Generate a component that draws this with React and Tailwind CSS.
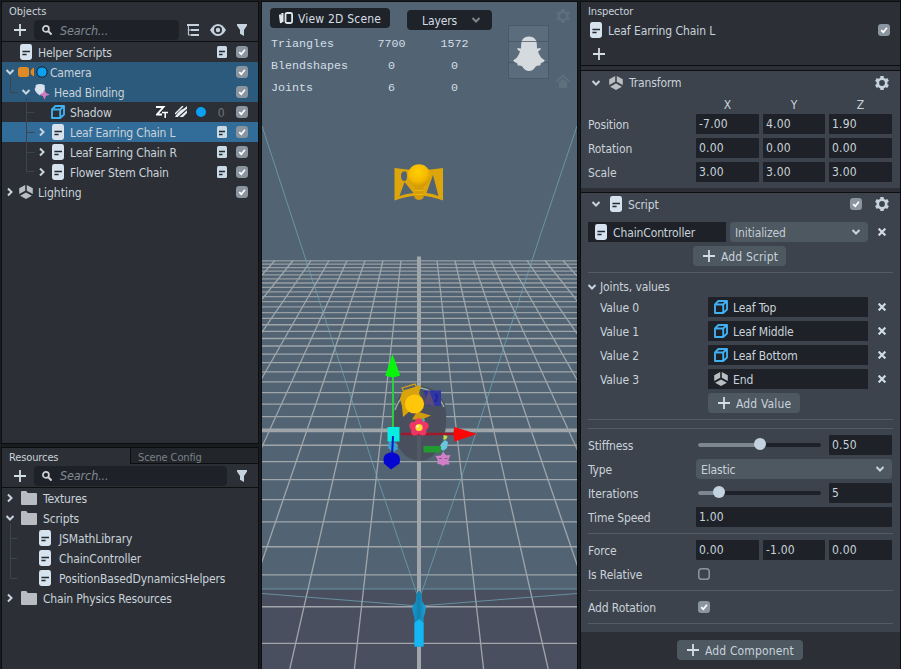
import React from 'react';

const PlusIcon = () => (
  <svg className="block h-3 w-3 shrink-0" viewBox="0 0 12 12" fill="none" stroke="#d3dde6" strokeWidth="1.8">
    <path d="M6 0v12M0 6h12" />
  </svg>
);

const ScriptIcon = ({ small }) =>
  small ? (
    <svg className="block h-3 w-2.5 shrink-0" viewBox="0 0 10 12">
      <rect width="10" height="12" rx="1.6" fill="#c9d9e6" />
      <path d="M2 5.500h6M2 8.500h3.500" stroke="#252a31" strokeWidth="1.500" />
    </svg>
  ) : (
    <svg className="block h-4 w-3 shrink-0" viewBox="0 0 12 16">
      <rect width="12" height="16" rx="2.4" fill="#d6e2ee" />
      <path d="M2.4 7.500h7.600M2.400 10.500h4.200" stroke="#252a31" strokeWidth="1.700" />
    </svg>
  );

const Check = ({ on = true }) => (
  <svg className="block h-3 w-3 shrink-0" viewBox="0 0 12 12" fill="none">
    {on ? (
      <>
        <rect width="12" height="12" rx="3.2" fill="#8b95a0" />
        <path d="M3.2 6.1l2.1 2.1L8.9 3.7" stroke="#fff" strokeWidth="1.7" />
      </>
    ) : (
      <rect x=".8" y=".8" width="10.4" height="10.4" rx="2.8" stroke="#8b95a0" strokeWidth="1.5" />
    )}
  </svg>
);

const Chevron = ({ right, dim }) => (
  <svg
    className={right ? 'block h-2.5 w-2 shrink-0 -rotate-90' : 'block h-2.5 w-2 shrink-0'}
    viewBox="0 0 8 10"
    fill="none"
    stroke={dim ? '#7b858e' : '#c7d3dd'}
    strokeWidth="2"
    overflow="visible"
  >
    <path d="M0.5 3l3.5 3.500l3.500-3.500" />
  </svg>
);

const CubeIcon = () => (
  <svg className="block h-3.5 w-3.5 shrink-0" viewBox="0 0 14 14" fill="none" stroke="#3fb0f0" strokeWidth="1.900" strokeLinejoin="round">
    <path d="M1 4.500h8.200v8.500H1zM1 4.500L4.400 1H13L9.200 4.500M13 1v8.500L9.200 13" />
  </svg>
);

const ObjectIcon = () => (
  <svg className="block h-3.5 w-3.5 shrink-0" viewBox="0 0 14 14" fill="#b9bec4">
    <path d="M6.2 0v5.7L0.2 9V3.2zM7.8 0v5.7l6 3.3V3.2zM7 7.6l5.900 3.200L7 14l-5.900-3.200z" />
  </svg>
);

const Folder = () => (
  <svg className="block h-3.5 w-4 shrink-0" viewBox="0 0 16 14" fill="#b9bdc2">
    <path d="M0 1q0-1 1-1h4.2l1.6 2H15q1 0 1 1v10q0 1-1 1H1q-1 0-1-1z" />
  </svg>
);

const Cross = () => (
  <svg className="block h-2 w-2 shrink-0" viewBox="0 0 8 8" fill="none" stroke="#d0dbe4" strokeWidth="2.200">
    <path d="M.6.6l6.8 6.8M7.4.6L.6 7.4" />
  </svg>
);

const Gear = () => (
  <svg className="block h-3.5 w-3.5 shrink-0" viewBox="0 0 14 14" fill="none">
    <circle cx="7" cy="7" r="4.200" stroke="#c6d3df" strokeWidth="2.600" />
    <path
      d="M7 0v2.6M7 11.4V14M.9 3.5l2.3 1.3M10.8 9.2l2.3 1.3M.9 10.5l2.3-1.3M10.8 4.8l2.3-1.3"
      stroke="#c6d3df"
      strokeWidth="3.400"
    />
  </svg>
);

const Magnifier = () => (
  <svg className="block h-2.5 w-2.5 shrink-0" viewBox="0 0 10 10" fill="none" stroke="#cdd3d9" strokeWidth="1.7">
    <circle cx="3.9" cy="3.9" r="3" />
    <path d="M6 6l3.6 3.6" strokeWidth="2" />
  </svg>
);

const Funnel = () => (
  <svg className="block h-3 w-2.5 shrink-0" viewBox="0 0 10 12" fill="#c6d3df">
    <path d="M0 0h10v1.5L7 6v6L3 9.8V6L0 1.5z" />
  </svg>
);

const Search = ({ grow }) => (
  <div className={`flex h-5 items-center rounded-sm bg-[#1e2228] pl-2 ${grow ? 'w-[193px]' : 'w-[145px]'}`}>
    <Magnifier />
    <span className="ml-2 pt-0.5 text-[12.5px] italic text-[#818991]">Search...</span>
  </div>
);

const TreeLine = ({ d, h, className }) => (
  <svg className={`pointer-events-none absolute w-4 ${className}`} height={h} fill="none" stroke="#3d444c" strokeWidth="1">
    <path d={d} />
  </svg>
);

const Row = ({ indent, bg = '', children, end }) => (
  <div className={`flex h-5 shrink-0 items-center pr-2.5 [&>span]:pt-0.5 ${indent} ${bg}`}>
    {children}
    <div className="ml-auto flex items-center gap-[9px]">{end}</div>
  </div>
);

const ScriptEnd = () => (
  <>
    <ScriptIcon small />
    <Check />
  </>
);

function ObjectsPanel() {
  return (
    <div className="relative flex h-[443px] flex-col border border-[#0c0e10] bg-[#2c3036] tracking-[-.17px]">
      <div className="flex h-[18px] shrink-0 items-center pl-[7px] pt-px text-[11px] tracking-normal">Objects</div>
      <div className="flex h-[22px] shrink-0 items-center border-b border-[#0c0e10] pb-px pl-3 pr-[11px]">
        <PlusIcon />
        <div className="ml-2">
          <Search />
        </div>
        <svg className="ml-2 block h-3 w-3" viewBox="0 0 12 12" fill="none" stroke="#c6d3df" strokeWidth="1.8">
          <path d="M0 1h12M4 6h8M4 11h8" />
          <path d="M1.4 1v5h2.6M1.4 5v6h2.6" strokeWidth="1" />
        </svg>
        <svg className="ml-[11px] block h-3 w-4" viewBox="0 0 16 12">
          <path d="M0 6Q3.500 0 8 0T16 6Q12.500 12 8 12T0 6z" fill="#c6d3df" />
          <circle cx="8" cy="6" r="4" fill="#2c3036" />
          <circle cx="8" cy="6" r="2.200" fill="#c6d3df" />
        </svg>
        <div className="ml-auto">
          <Funnel />
        </div>
      </div>
      <Row indent="pl-[18px]" end={<ScriptEnd />}>
        <ScriptIcon />
        <span className="ml-1.5">Helper Scripts</span>
      </Row>
      <Row indent="pl-1" bg="bg-[#2b5a7d]" end={<Check />}>
        <Chevron />
        <svg className="ml-1 block h-3 w-[30px]" viewBox="0 0 30 12">
          <rect y="1" width="11" height="10" rx="2.500" fill="#e08a26" />
          <path d="M16 1.500v9q-3.500-2-3.500-4.500t3.500-4.500z" fill="#e08a26" />
          <circle cx="24" cy="6" r="5.200" fill="#0c9ff2" stroke="#15222e" strokeWidth="1" />
        </svg>
        <span className="ml-0.5">Camera</span>
      </Row>
      <Row indent="pl-5" bg="bg-[#2b5a7d]" end={<Check />}>
        <Chevron />
        <svg className="ml-1 block h-4 w-4" viewBox="0 0 16 16">
          <path d="M1.800 1Q6-1 10.500 1l.400 4Q10.500 9 6 11.500 1.600 9 1.200 5z" fill="#d6e2ee" />
          <path d="M0.500 4.500h2v3H1.500z" fill="#d6e2ee" />
          <path d="M10.500 5.500l1.500 3.600L15.800 10.600l-3.800 1.500L10.500 15.800l-1.500-3.700-3.800-1.500 3.800-1.500z" fill="#d27bbd" />
        </svg>
        <span className="ml-1">Head Binding</span>
      </Row>
      <Row
        indent="pl-[49px]"
        end={
          <>
            <svg className="block h-3 w-3" viewBox="0 0 12 12" fill="none" stroke="#fff" strokeWidth="1.900">
              <path d="M0 1h7.500L1 8.500h5" />
              <path d="M6 6.500h6M9.200 6.500V12" strokeWidth="1.500" />
            </svg>
            <svg className="-ml-0.5 block h-3 w-3" viewBox="0 0 12 12" fill="#e9eef2">
              <path d="M4 4Q8 4 12 0v7l-4 4H0z" />
              <path d="M0 9L9 0M2.500 12L12 3.500M0 5l5-5" stroke="#2c3036" strokeWidth="1.100" />
              <path d="M0 8L8 0" stroke="#e9eef2" strokeWidth="1.500" />
            </svg>
            <div className="h-2.5 w-2.5 rounded-full bg-[#0c9ff2]" />
            <span className="w-3 pt-0.5 text-center text-[#6d757e]">0</span>
            <Check />
          </>
        }
      >
        <CubeIcon />
        <span className="ml-[5px]">Shadow</span>
      </Row>
      <Row indent="pl-9" bg="bg-[#326d99]" end={<ScriptEnd />}>
        <Chevron right />
        <div className="ml-1.5 mr-1.5">
          <ScriptIcon />
        </div>
        <span>Leaf Earring Chain L</span>
      </Row>
      <Row indent="pl-9" end={<ScriptEnd />}>
        <Chevron right />
        <div className="ml-1.5 mr-1.5">
          <ScriptIcon />
        </div>
        <span>Leaf Earring Chain R</span>
      </Row>
      <Row indent="pl-9" end={<ScriptEnd />}>
        <Chevron right />
        <div className="ml-1.5 mr-1.5">
          <ScriptIcon />
        </div>
        <span>Flower Stem Chain</span>
      </Row>
      <Row indent="pl-1" end={<Check />}>
        <Chevron right />
        <div className="ml-[5px] mr-[5px]">
          <ObjectIcon />
        </div>
        <span className="tracking-normal">Lighting</span>
      </Row>
      <TreeLine className="left-2 top-[75px]" h="20" d="M.5 0v15.500h7" />
      <TreeLine className="left-6 top-[96px]" h="80" d="M.5 0v73.500h8M.500 14.500h8M.500 34.500h8M.500 54.500h8" />
    </div>
  );
}

function ResourcesPanel() {
  return (
    <div className="relative mt-[3px] flex flex-1 flex-col border border-b-0 border-[#0c0e10] bg-[#2c3036]">
      <div className="flex h-4 shrink-0">
        <div className="flex w-32 items-center pl-[7px] pt-0.5 text-[11px]">Resources</div>
        <div className="flex flex-1 items-center border-b border-l border-[#0c0e10] bg-[#22262b] pl-[7px] pt-1 text-[11px] text-[#7a8087]">
          Scene Config
        </div>
      </div>
      <div className="flex h-6 shrink-0 items-center border-b border-[#0c0e10] pl-3 pr-[11px]">
        <PlusIcon />
        <div className="ml-2">
          <Search grow />
        </div>
        <div className="ml-auto">
          <Funnel />
        </div>
      </div>
      <Row indent="pl-1">
        <Chevron right />
        <div className="ml-[7px] mr-1.5">
          <Folder />
        </div>
        <span>Textures</span>
      </Row>
      <Row indent="pl-1">
        <Chevron />
        <div className="ml-[7px] mr-1.5">
          <Folder />
        </div>
        <span>Scripts</span>
      </Row>
      {['JSMathLibrary', 'ChainController', 'PositionBasedDynamicsHelpers'].map((name) => (
        <Row indent="pl-[37px]" key={name}>
          <ScriptIcon />
          <span className="ml-2">{name}</span>
        </Row>
      ))}
      <Row indent="pl-1">
        <Chevron right />
        <div className="ml-[7px] mr-1.5">
          <Folder />
        </div>
        <span className="tracking-[-.17px]">Chain Physics Resources</span>
      </Row>
      <TreeLine className="left-2 top-[76px]" h="60" d="M.5 0v54.500h7M.500 14.500h7M.500 34.500h7" />
    </div>
  );
}

const rows = Array.from({ length: 37 }, (_, i) => {
  const n = i - 25;
  return { n, y: 107.33 + 1 / 3 / (0.00103199 - n * 0.000045567) };
});
const cols = Array.from({ length: 17 }, (_, i) => i - 8);

function Scene() {
  return (
    <svg className="absolute inset-0 block h-full w-full" viewBox="262 2 315 667">
      <defs>
        <radialGradient id="bulb" cx=".45" cy=".35" r=".7">
          <stop offset="0" stopColor="#ffd000" />
          <stop offset=".6" stopColor="#f5b800" />
          <stop offset="1" stopColor="#c89000" />
        </radialGradient>
        <linearGradient id="cam" x1="0" x2="1">
          <stop offset="0" stopColor="#149bd2" />
          <stop offset=".5" stopColor="#1480ae" />
          <stop offset="1" stopColor="#18a6de" />
        </linearGradient>
      </defs>
      <rect x="262" y="2" width="315" height="667" fill="#526473" />
      <rect x="262" y="589" width="315" height="80" fill="#4a4f5f" />
      <g stroke="#a0a5aa">
        {rows.map(({ n, y }) => (
          <path key={n} d={`M262 ${y}H577`} strokeWidth={n === 0 ? 3.6 : 1.3} opacity={n < -12 ? 0.9 : 1} />
        ))}
        {cols.map((k) => (
          <path key={k} d={`M${419 + k * 18} 260.5L${419 + k * 64.6} 669`} strokeWidth={k === 0 ? 0 : 1.3} />
        ))}
        <path d="M419 256.500V669" strokeWidth="4" />
      </g>
      <g fill="none" stroke="#6fa5b5" strokeWidth="1" opacity=".75">
        <path d="M262 126L299.300 240L377 476.700L419 600L461.700 476.700L538.700 240L577 126" />
        <path d="M262 589H577M262 593.500L419 606L577 593.500" />
      </g>

      <g>
        <path
          fillRule="evenodd"
          fill="#dca50b"
          d="M394.500 168Q419 172 443 168V200.500Q419 191 394.500 200.500zM404 171.500q-3 0-3 4.500t3 5 3-5-3-4.500zM404.500 182l-5 14q7-2.500 14-3zM433 175l-6.500 18q6 .500 12 3z"
        />
        <circle cx="419" cy="175.500" r="11.200" fill="url(#bulb)" />
        <path d="M414.500 186h9v12q-4.500 4-9 0z" fill="#d49c08" />
        <path d="M414.500 190q4.500 1.500 9 0M414.500 194q4.500 1.500 9 0" stroke="#f0b90c" fill="none" />
      </g>

      <path d="M396 404Q402 386 419 386T445 404Q448 424 444 436Q436 461 419 461Q401 459 395 438Q391 422 396 404z" fill="#4a4f5d" />
      <path d="M417 386v75h4v-75z" fill="#59606c" opacity=".6" />
      <path d="M395 410Q402 390 421 388Q437 391 444 407" fill="none" stroke="#8fae9c" strokeWidth="1.500" />
      <path d="M423.500 390.500H441V406H428z" fill="#3236a4" />
      <path d="M429 390l-5 14 11 2.500z" fill="#5d4d72" />
      <path d="M435 394q4 2 0 8" fill="none" stroke="#20259b" strokeWidth="2" />
      <g>
        <path d="M402 388l13-4 1.500 3-13 4z" fill="none" stroke="#dca50b" strokeWidth="1.300" />
        <path d="M402 392l19-7-2 8 3 7-12 11-7 6-1-11-2-7z" fill="#d9a30c" />
        <path d="M412 419.500l5-8 14 4-9 4z" fill="#d09b0b" />
        <circle cx="414.500" cy="404" r="9.600" fill="#ffc60a" />
        <path d="M420 420l4-2 1 3-3 3z" fill="#38bca8" />
      </g>
      <path d="M401 434H455" stroke="#a3182b" strokeWidth="2.500" />
      <g fill="#ef3566">
        <circle cx="419" cy="422.500" r="4.200" />
        <circle cx="424.500" cy="426" r="4.200" />
        <circle cx="422.500" cy="431.500" r="4" />
        <circle cx="415" cy="431.500" r="4" />
        <circle cx="413.500" cy="426" r="4.200" />
      </g>
      <circle cx="419" cy="427.500" r="3.600" fill="#f8dc32" />
      <circle cx="417.600" cy="426.500" r="1.200" fill="#fff7c0" />

      <path d="M393 377V428" stroke="#22dc35" strokeWidth="1.800" />
      <path d="M392.500 354L385.300 375.500Q392.500 379 400.200 375.500z" fill="#08f40b" />
      <path d="M454.500 427L477 434L454.500 441.500Q452.500 434 454.500 427z" fill="#fa0808" />
      <path d="M423.500 446h17.500v6.500h-17.500z" fill="#239a31" />
      <path d="M389 441l7 2 2 6-5 3-5-4z" fill="#35a2d4" />
      <path d="M387.500 427h12v14.500h-12z" fill="#06eee0" />
      <path d="M393 436l-1 20" stroke="#0518c8" strokeWidth="2" />
      <path d="M391 469.500L384 463.500Q381.500 453 391.500 452.500Q402 453 399.500 463.500z" fill="#0606d2" />
      <path d="M443.500 435l4 1-1 3-3 1z" fill="#c1db52" />
      <path d="M441 444l4-4 3 2-1 6-4 3-2-2z" fill="#68c7de" />
      <path d="M435.500 456l5.500-.500 2-4 3 3.800 4.500-.300-2 4.500 1 5-4 0-3 1.500-1.500-1.500-3.500-.500 0-4.500z" fill="#cf80c7" />
      <path d="M439 458.500h3M444.500 458.500h3" stroke="#84477f" strokeWidth=".8" />

      <path d="M419 590.500Q422.500 593 422 601L426 607Q425 614 423.500 618V646.500H414.500V618Q413 614 412 607L416 601Q415.500 593 419 590.500z" fill="url(#cam)" />
      <path d="M414.500 623l4.500-4 4.500 4v23.500h-9z" fill="#15b7f3" />

      <g opacity=".9">
        <rect x="508.500" y="25.500" width="40" height="53" fill="#5d6f7e" stroke="#4a5966" />
        <path
          d="M529 36.500Q536.500 36.500 536.800 44L537 48.500l3.500-.500q1 1.500-2.500 3.500Q540 58 544.500 60q.5 2-3.500 3l-.8 2.500q-3-.500-4.500 1-2.700 4.500-6.700 4.500t-6.700-4.500q-1.500-1.500-4.500-1l-.8-2.500q-4-1-3.500-3 4.500-2 6.500-8.500-3.500-2-2.500-3.500l3.500.500.2-4.500Q521.500 36.500 529 36.500z"
          fill="#e4e7ea"
        />
        <path d="M508 41.500h41" stroke="#475561" opacity=".75" />
        <path d="M508 62.500h7M543 62.500h6" stroke="#475561" opacity=".75" />
      </g>
      <g fill="none" stroke="#64727f" opacity=".8">
        <circle cx="563" cy="16" r="4.200" strokeWidth="2.400" />
        <path
          d="M563 9v3M563 20v3M556.900 12.500l2.600 1.500M566.500 18l2.600 1.500M556.900 19.500l2.600-1.500M566.500 14l2.600-1.500"
          strokeWidth="3"
        />
        <path d="M556.500 81.500l6.500-6 6.500 6" strokeWidth="2" />
        <path d="M559 82l4-3.500 4 3.500v6h-8z" fill="#64727f" stroke="none" />
      </g>
    </svg>
  );
}

function Viewport() {
  return (
    <div className="relative h-full w-[317px] shrink-0 border border-b-0 border-[#0c0e10]">
      <Scene />
      <div className="relative flex items-start pl-2 pt-1.5">
        <div className="flex h-5 w-[120px] items-center rounded-[4px] bg-[#1e2329] pl-[9px] text-[#d6dee5]">
          <svg className="mr-[5px] block h-3 w-3.5" viewBox="0 0 14 12" fill="none" stroke="#dfe7ee" strokeWidth="1.800">
            <rect x="6.500" y="1" width="6.600" height="10" rx="1.500" />
            <path d="M3.400 1v9M.9 2.500l1.200 8.500" strokeWidth="2.200" />
          </svg>
          <span className="whitespace-nowrap pt-0.5 tracking-[.2px]">View 2D Scene</span>
        </div>
        <div className="ml-[17px] mt-0.5 flex h-5 w-[85px] items-center justify-between rounded-[4px] bg-[#1e2329] pl-[15px] pr-3 text-[#d6dee5]">
          <span className="pt-0.5">Layers</span>
          <Chevron dim />
        </div>
      </div>
      <div className="relative ml-[9px] mt-[3px] grid w-52 grid-cols-[89px_63px_63px] font-['Liberation_Mono',monospace] text-[11.67px] leading-[22px] tracking-normal text-[#d3dee7]">
        <span>Triangles</span>
        <span className="text-center">7700</span>
        <span className="text-center">1572</span>
        <span>Blendshapes</span>
        <span className="text-center">0</span>
        <span className="text-center">0</span>
        <span>Joints</span>
        <span className="text-center">6</span>
        <span className="text-center">0</span>
      </div>
    </div>
  );
}

const Num = ({ children, w = 'w-[63px]' }) => (
  <div className={`flex h-5 items-center rounded-[1px] bg-[#1e2228] pl-[3px] tracking-[.2px] ${w}`}>{children}</div>
);

const Field = ({ label, children }) => (
  <div className="mb-1 flex h-5 items-center">
    <span className="w-[108px] pt-px">{label}</span>
    {children}
  </div>
);

const Vec = ({ label, v }) => (
  <Field label={label}>
    <div className="flex gap-1">
      <Num>{v[0]}</Num>
      <Num w="w-[62px]">{v[1]}</Num>
      <Num>{v[2]}</Num>
    </div>
  </Field>
);

const Slider = ({ pos }) => (
  <div className="relative ml-0.5 mr-2 h-1 w-[123px] rounded-full bg-[#1e2228]">
    <div className="h-1 rounded-full bg-[#7c8791]" style={{ width: pos }} />
    <div className="absolute -top-[5px] h-3 w-3 rounded-full bg-[#c3d2df]" style={{ left: pos - 6 }} />
  </div>
);

const Button = ({ children, className }) => (
  <div className={`flex h-5 items-center gap-1.5 rounded-[4px] bg-[#4d5861] pl-2.5 ${className}`}>
    <PlusIcon />
    <span className="whitespace-nowrap pt-px tracking-[.15px]">{children}</span>
  </div>
);

const Divider = ({ className }) => <div className={`h-px shrink-0 bg-[#535b65] ${className}`} />;

const joints = [
  ['Value 0', 'Leaf Top', CubeIcon],
  ['Value 1', 'Leaf Middle', CubeIcon],
  ['Value 2', 'Leaf Bottom', CubeIcon],
  ['Value 3', 'End', ObjectIcon],
];

function Inspector() {
  return (
    <div className="flex h-full w-[321px] flex-col border border-b-0 border-[#0c0e10] bg-[#2c3036]">
      <div className="h-[64px] shrink-0 border-b border-[#0c0e10] px-[9px]">
        <div className="-ml-0.5 h-[18px] pt-0.5 text-[11px] leading-4">Inspector</div>
        <div className="flex h-5 items-center pr-px">
          <ScriptIcon />
          <span className="ml-1.5 pt-px tracking-[-.08px]">Leaf Earring Chain L</span>
          <div className="ml-auto">
            <Check />
          </div>
        </div>
        <div className="ml-[3px] mt-2">
          <PlusIcon />
        </div>
      </div>

      <div className="mt-1 h-[118px] shrink-0 border-t border-[#0c0e10] bg-[#3d434c] pl-[7px]">
        <div className="flex h-[23px] items-center pl-1 pr-[11px]">
          <Chevron />
          <div className="ml-[9px] mr-1.5">
            <ObjectIcon />
          </div>
          <span className="pt-px">Transform</span>
          <div className="ml-auto">
            <Gear />
          </div>
        </div>
        <div className="ml-[108px] flex h-5 gap-1 text-center leading-[22px]">
          <span className="w-[63px]">X</span>
          <span className="w-[62px]">Y</span>
          <span className="w-[63px]">Z</span>
        </div>
        <Vec label="Position" v={['-7.00', '4.00', '1.90']} />
        <Vec label="Rotation" v={['0.00', '0.00', '0.00']} />
        <Vec label="Scale" v={['3.00', '3.00', '3.00']} />
      </div>

      <div className="mt-1 flex h-[440px] shrink-0 flex-col border-t border-[#0c0e10] bg-[#3d434c] px-[7px]">
        <div className="flex h-[22px] shrink-0 items-center pl-1 pr-1">
          <Chevron />
          <div className="ml-2.5 mr-1.5">
            <ScriptIcon />
          </div>
          <span className="pt-px">Script</span>
          <div className="ml-auto flex items-center gap-[13px]">
            <Check />
            <Gear />
          </div>
        </div>
        <div className="mt-[7px] flex h-5 shrink-0 items-center">
          <div className="flex h-5 w-[138px] items-center bg-[#1e2228] pl-[7px]">
            <ScriptIcon />
            <span className="ml-1.5 pt-px">ChainController</span>
          </div>
          <div className="ml-1 flex h-5 w-[138px] items-center justify-between rounded-[4px] bg-[#4d5861] pl-[5px] pr-2">
            <span className="pt-px text-[#c3ccd4]">Initialized</span>
            <Chevron />
          </div>
          <div className="ml-2.5">
            <Cross />
          </div>
        </div>
        <Button className="ml-[105px] mt-1 w-[93px] shrink-0">Add Script</Button>
        <Divider className="mt-1.5" />
        <div className="flex h-6 shrink-0 items-center pt-1">
          <Chevron />
          <span className="ml-1">Joints, values</span>
        </div>
        {joints.map(([label, name, Icon]) => (
          <div className="mb-1 flex h-5 shrink-0 items-center pl-3" key={label}>
            <span className="w-[108px] pt-px">{label}</span>
            <div className="flex h-5 w-40 items-center bg-[#1e2228] pl-1.5">
              <Icon />
              <span className="ml-[5px] pt-px">{name}</span>
            </div>
            <div className="ml-2.5">
              <Cross />
            </div>
          </div>
        ))}
        <Button className="ml-[120px] w-[92px] shrink-0">Add Value</Button>
        <Divider className="mt-1.5" />
        <Divider className="mb-1.5 mt-2" />
        <Field label="Stiffness">
          <Slider pos={62} />
          <Num>0.50</Num>
        </Field>
        <Field label="Type">
          <div className="flex h-5 w-[196px] items-center justify-between rounded-[4px] bg-[#4d5861] pl-[5px] pr-2">
            <span className="pt-px">Elastic</span>
            <Chevron />
          </div>
        </Field>
        <Field label="Iterations">
          <Slider pos={21} />
          <Num>5</Num>
        </Field>
        <Field label="Time Speed">
          <Num w="w-[196px]">1.00</Num>
        </Field>
        <Divider className="mb-1.5 mt-0.5" />
        <Vec label="Force" v={['0.00', '-1.00', '0.00']} />
        <Field label="Is Relative">
          <div className="ml-0.5">
            <Check on={false} />
          </div>
        </Field>
        <Divider className="mb-1.5 mt-0.5" />
        <Field label="Add Rotation">
          <div className="ml-0.5">
            <Check />
          </div>
        </Field>
        <Divider className="mt-0.5" />
      </div>
      <Button className="ml-24 mt-2 w-[126px] shrink-0">Add Component</Button>
    </div>
  );
}

export default function App() {
  return (
    <div className="flex h-[669px] w-[901px] overflow-hidden bg-[#181c20] pl-px pt-px font-['DejaVu_Sans_Condensed','DejaVu_Sans',sans-serif] text-[12px] leading-none tracking-[-.12px] text-[#c9d2da] [font-stretch:condensed]">
      <div className="flex w-[258px] shrink-0 flex-col">
        <ObjectsPanel />
        <ResourcesPanel />
      </div>
      <div className="ml-0.5">
        <Viewport />
      </div>
      <div className="ml-0.5">
        <Inspector />
      </div>
    </div>
  );
}
